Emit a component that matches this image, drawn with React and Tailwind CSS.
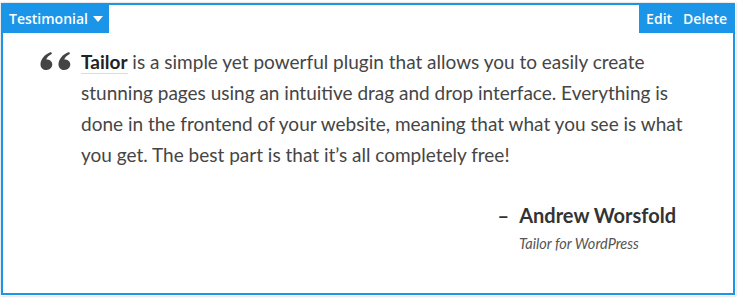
const QuoteLeft = () => (
  <svg width="32" height="18" viewBox="0 0 32 18" className="shrink-0">
    <path
      d="M6.5 18C3 18 0.5 15.6 0.5 12.4 0.5 7.5 4.5 2.2 11 0l1 1.8C8.6 3.6 6.8 5.6 6.3 7.4c0.2 0 0.4 0 0.6 0 3 0 5.4 2.2 5.4 5.2S9.8 18 6.5 18z"
      fill="#444"
    />
    <path
      d="M24.5 18c-3.5 0-6-2.4-6-5.6 0-4.9 4-10.2 10.5-12.4l1 1.8c-3.4 1.8-5.2 3.8-5.7 5.6 0.2 0 0.4 0 0.6 0 3 0 5.4 2.2 5.4 5.2S27.8 18 24.5 18z"
      fill="#444"
    />
  </svg>
);

const App = () => {
  return (
    <div className="bg-white w-[738px] h-[299px] pt-[3px] pl-[1px]">
      <div className="w-[735px] h-[293px] shadow-[0_0_2px_rgba(0,0,0,0.25)]">
        <div className="relative w-[734px] h-[292px] border-2 border-[#1b95e8] bg-white">
          <div className="absolute -left-[1px] -top-[1px] h-[29px] bg-[#1b95e8] flex items-center pl-[7px] pr-[6px] gap-[5px] text-white text-[14px] font-semibold font-['Open_Sans',sans-serif]">
            <span>Testimonial</span>
            <svg width="10" height="6" viewBox="0 0 10 6">
              <path d="M0 0h10L5 6z" fill="#fff" />
            </svg>
          </div>
          <div className="absolute -right-[1px] -top-[1px] h-[29px] bg-[#1b95e8] flex items-center pl-[7px] pr-[7px] gap-[11px] text-white text-[14px] font-semibold font-['Open_Sans',sans-serif]">
            <span>Edit</span>
            <span>Delete</span>
          </div>

          <div className="flex gap-[9px] pl-[37px] pt-[41px] font-['Lato',sans-serif] text-[#454545]">
            <div className="pt-[6px]">
              <QuoteLeft />
            </div>
            <div className="w-[615px]">
              <p className="text-[19px] leading-[31px]">
                <span className="font-bold text-[#222] border-b border-[#ddd]">Tailor</span> is a simple yet powerful plugin that allows you to easily create stunning pages using an intuitive drag and drop interface. Everything is done in the frontend of your website, meaning that what you see is what you get. The best part is that it’s all completely free!
              </p>
              <div className="flex flex-col items-end pr-[20px] pt-[32px]">
                <div className="text-[20px] font-bold text-[#333] leading-[26px]">
                  <span className="mr-[10px]">–</span>Andrew Worsfold
                </div>
                <div className="w-[157px] pt-[5px] text-[14.5px] italic text-[#555]">Tailor for WordPress</div>
              </div>
            </div>
          </div>
        </div>
      </div>
    </div>
  );
};

export default App;
